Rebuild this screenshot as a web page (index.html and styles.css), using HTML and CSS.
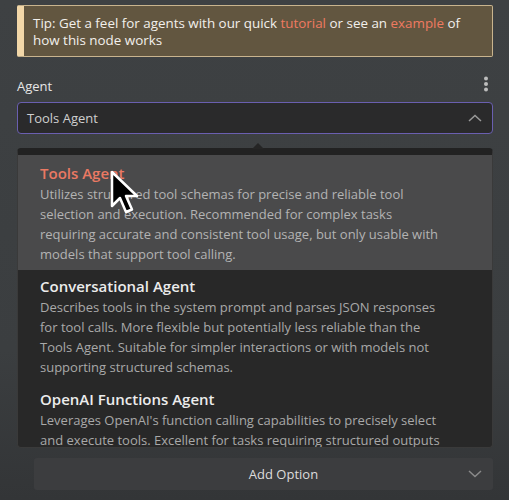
FILE: index.html
```html
<!DOCTYPE html>
<html>
<head>
<meta charset="utf-8">
<link rel="stylesheet" href="styles.css">
</head>
<body>
<div class="page">
  <div class="tip">Tip: Get a feel for agents with our quick <span class="link">tutorial</span> or see an <span class="link">example</span> of how this node works</div>

  <div class="label-row">
    <span class="label">Agent</span>
    <svg class="dots" width="6" height="16" viewBox="0 0 6 16"><circle cx="3" cy="2.5" r="2" fill="#bdbdbd"/><circle cx="3" cy="8" r="2" fill="#bdbdbd"/><circle cx="3" cy="13.5" r="2" fill="#bdbdbd"/></svg>
  </div>

  <div class="select">
    <span class="select-text">Tools Agent</span>
    <svg class="chev" width="14" height="8" viewBox="0 0 14 8"><path d="M1 7 L7 1.5 L13 7" fill="none" stroke="#9a9a9a" stroke-width="1.5"/></svg>
  </div>

  <div class="dropdown-wrap">
    <div class="caret"></div>
    <div class="dropdown">
      <div class="opt hover">
        <div class="opt-title">Tools Agent</div>
        <div class="opt-desc">Utilizes structured tool schemas for precise and reliable tool selection and execution. Recommended for complex tasks requiring accurate and consistent tool usage, but only usable with models that support tool calling.</div>
      </div>
      <div class="opt">
        <div class="opt-title">Conversational Agent</div>
        <div class="opt-desc">Describes tools in the system prompt and parses JSON responses for tool calls. More flexible but potentially less reliable than the Tools Agent. Suitable for simpler interactions or with models not supporting structured schemas.</div>
      </div>
      <div class="opt">
        <div class="opt-title">OpenAI Functions Agent</div>
        <div class="opt-desc">Leverages OpenAI's function calling capabilities to precisely select and execute tools. Excellent for tasks requiring structured outputs</div>
      </div>
    </div>
  </div>

  <div class="add">
    <span>Add Option</span>
    <svg class="chev-down" width="14" height="8" viewBox="0 0 14 8"><path d="M1 1 L7 6.5 L13 1" fill="none" stroke="#8a8a8a" stroke-width="1.5"/></svg>
  </div>

  <svg class="cursor" width="32" height="46" viewBox="0 0 32 46"><path d="M2 2 L2 36 L10 28 L16 42 L22 39.5 L16 26 L27 26 Z" fill="#000" stroke="#fff" stroke-width="2.5" stroke-linejoin="round"/></svg>
</div>
</body>
</html>
```
FILE: styles.css
```css
* { box-sizing: border-box; }
html, body { margin: 0; padding: 0; }
body {
  width: 509px;
  height: 500px;
  overflow: hidden;
  background: linear-gradient(180deg, #3e4143 0%, #3b3e40 70%, #333537 100%);
  font-family: "Open Sans", "Noto Sans", sans-serif;
}
.page {
  position: relative;
  padding: 5px 16px 0 17px;
}
.tip {
  background: #625640;
  border: 1px solid #c9b48e;
  border-left: 7px solid #f2d7a8;
  border-radius: 2px;
  color: #f2f0ec;
  font-size: 13.4px;
  line-height: 17px;
  padding: 9px 10px 8px 9px;
  height: 52px;
}
.link { color: #ef7a61; }
.label-row {
  display: flex;
  justify-content: space-between;
  align-items: center;
  margin-top: 20px;
  height: 18px;
  padding-right: 4px;
}
.label { color: #e6e6e6; font-size: 13px; }
.dots { display: block; margin-top: -4px; }
.select {
  margin-top: 7px;
  height: 32px;
  background: #2a2a2b;
  border: 1.5px solid #6a5fb0;
  border-radius: 4px;
  display: flex;
  align-items: center;
  justify-content: space-between;
  padding: 0 10px 0 9px;
}
.select-text { color: #cfcfcf; font-size: 13px; }
.chev { display: block; }
.dropdown-wrap {
  position: relative;
  margin-top: 14px;
}
.caret {
  position: absolute;
  top: -5px;
  left: 235px;
  width: 0;
  height: 0;
  border-left: 6px solid transparent;
  border-right: 6px solid transparent;
  border-bottom: 6px solid #252525;
}
.dropdown {
  height: 300px;
  background: #282828;
  border: 1px solid #3a3a3a;
  border-top: 7px solid #222222;
  border-radius: 4px;
  overflow: hidden;
}
.opt {
  padding: 5px 45px 6px 22px;
}
.opt.hover { background: #4a4a4b; padding-top: 7px; padding-bottom: 6px; }
.opt-title {
  font-size: 15px;
  font-weight: 600;
  color: #ececec;
  line-height: 22px;
}
.opt.hover .opt-title { color: #ea7963; }
.opt-desc {
  font-size: 13px;
  line-height: 20px;
  color: #a9a9a9;
}
.opt.hover .opt-desc { color: #b3b3b3; }
.add {
  margin: 10px 0 0 17px;
  height: 32px;
  background: #3c3d3f;
  border-radius: 3px;
  display: flex;
  align-items: center;
  justify-content: center;
  padding-left: 40px;
  position: relative;
  color: #dcdcdc;
  font-size: 13px;
}
.chev-down { position: absolute; right: 11px; top: 12px; }
.cursor { position: absolute; left: 110px; top: 170px; }
```
